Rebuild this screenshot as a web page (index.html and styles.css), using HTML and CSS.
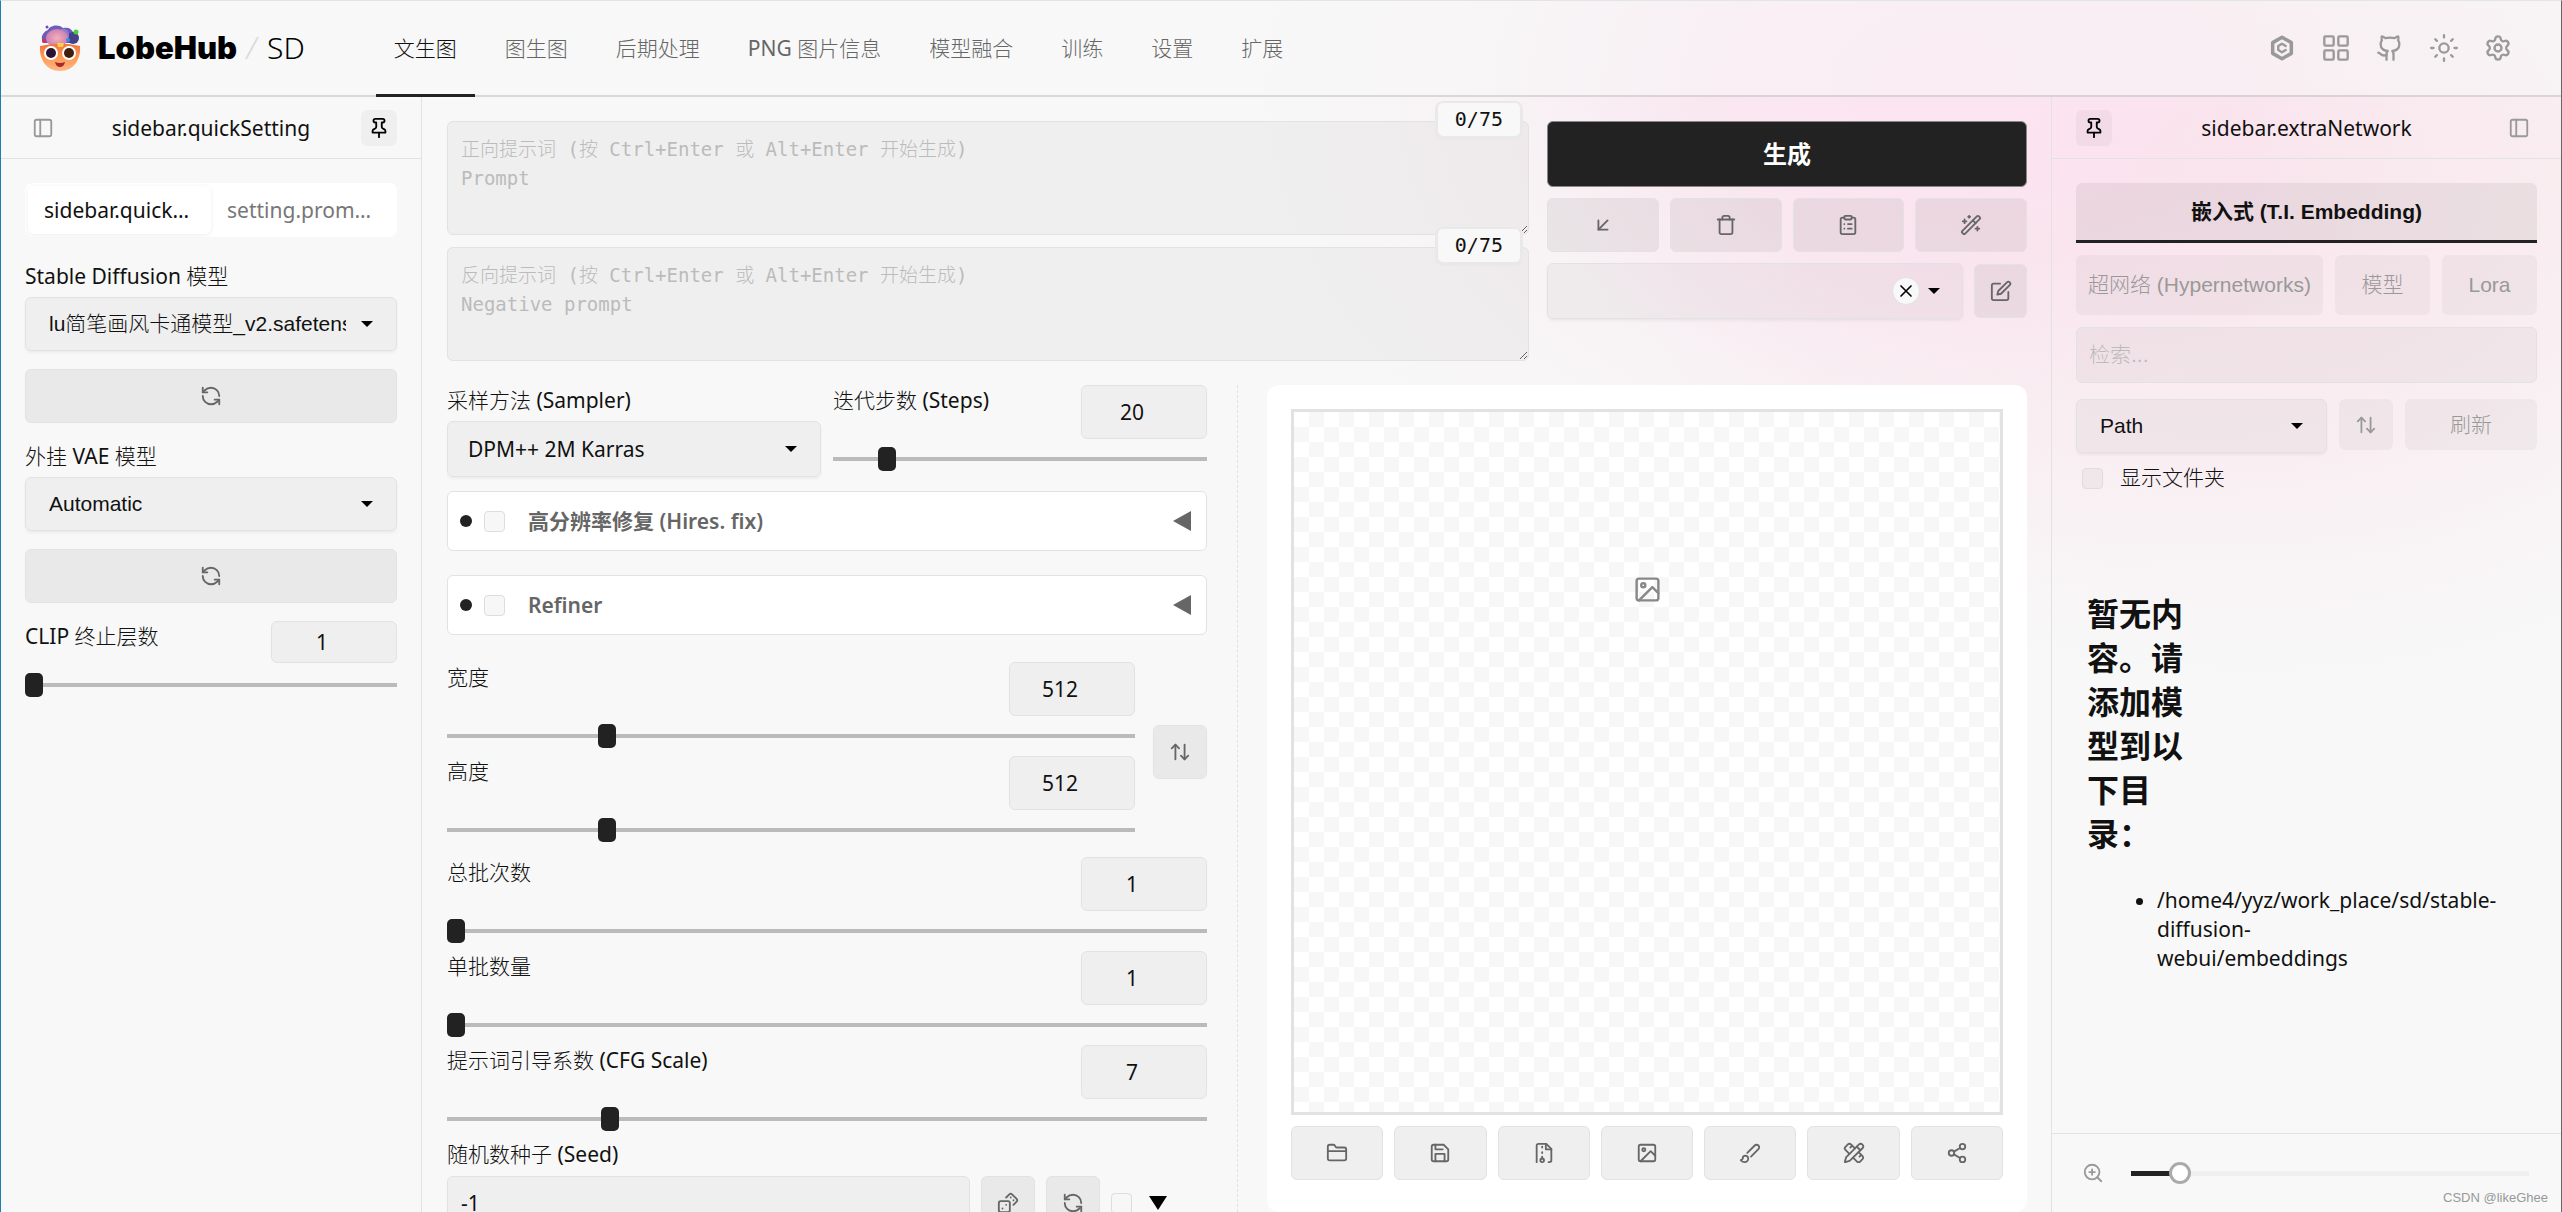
FILE: index.html
```html
<!DOCTYPE html>
<html lang="zh-CN">
<head>
<meta charset="utf-8">
<title>LobeHub SD</title>
<link rel="stylesheet" href="styles.css">
</head>
<body>
<svg class="sprite" aria-hidden="true">
  <symbol id="i-panel" viewBox="0 0 24 24"><rect x="3" y="3" width="18" height="18" rx="2"/><path d="M9 3v18"/></symbol>
  <symbol id="i-pin" viewBox="0 0 24 24"><path d="M12 17v5"/><path d="M5 17h14v-1.76a2 2 0 0 0-1.11-1.79l-1.78-.9A2 2 0 0 1 15 10.76V6h1a2 2 0 0 0 0-4H8a2 2 0 0 0 0 4h1v4.76a2 2 0 0 1-1.11 1.79l-1.78.9A2 2 0 0 0 5 15.24Z"/></symbol>
  <symbol id="i-refresh" viewBox="0 0 24 24"><path d="M21 12a9 9 0 0 0-9-9 9.750 9.750 0 0 0-6.740 2.740L3 8"/><path d="M3 3v5h5"/><path d="M3 12a9 9 0 0 0 9 9 9.750 9.750 0 0 0 6.740-2.740L21 16"/><path d="M16 16h5v5"/></symbol>
  <symbol id="i-swap" viewBox="0 0 24 24"><path d="m3 8 4-4 4 4"/><path d="M7 4v16"/><path d="m21 16-4 4-4-4"/><path d="M17 20V4"/></symbol>
  <symbol id="i-arrow" viewBox="0 0 24 24"><path d="M17 7 7 17"/><path d="M17 17H7V7"/></symbol>
  <symbol id="i-trash" viewBox="0 0 24 24"><path d="M3 6h18"/><path d="M19 6v14a2 2 0 0 1-2 2H7a2 2 0 0 1-2-2V6"/><path d="M8 6V4a2 2 0 0 1 2-2h4a2 2 0 0 1 2 2v2"/></symbol>
  <symbol id="i-clip" viewBox="0 0 24 24"><rect x="8" y="2" width="8" height="4" rx="1"/><path d="M16 4h2a2 2 0 0 1 2 2v14a2 2 0 0 1-2 2H6a2 2 0 0 1-2-2V6a2 2 0 0 1 2-2h2"/><path d="M12 11h4M12 16h4M8 11h.01M8 16h.01"/></symbol>
  <symbol id="i-wand" viewBox="0 0 24 24"><path d="m21.640 3.640-1.280-1.280a1.210 1.210 0 0 0-1.720 0L2.360 18.640a1.210 1.210 0 0 0 0 1.720l1.280 1.280a1.200 1.200 0 0 0 1.720 0L21.640 5.360a1.200 1.200 0 0 0 0-1.720Z"/><path d="m14 7 3 3M5 6v4M19 14v4M10 2v2M7 8H3M21 16h-4M11 3H9"/></symbol>
  <symbol id="i-edit" viewBox="0 0 24 24"><path d="M11 4H4a2 2 0 0 0-2 2v14a2 2 0 0 0 2 2h14a2 2 0 0 0 2-2v-7"/><path d="M18.500 2.500a2.120 2.120 0 0 1 3 3L12 15l-4 1 1-4Z"/></symbol>
  <symbol id="i-x" viewBox="0 0 24 24"><path d="M18 6 6 18M6 6l12 12"/></symbol>
  <symbol id="i-image" viewBox="0 0 24 24"><rect x="3" y="3" width="18" height="18" rx="2"/><circle cx="8.500" cy="8.500" r="1.700"/><path d="m21 15-5-5L5 21"/></symbol>
  <symbol id="i-folder" viewBox="0 0 24 24"><path d="M4 20h16a2 2 0 0 0 2-2V8a2 2 0 0 0-2-2h-7.930a2 2 0 0 1-1.660-.9l-.820-1.200A2 2 0 0 0 7.930 3H4a2 2 0 0 0-2 2v13a2 2 0 0 0 2 2Z"/><path d="M2 10h20"/></symbol>
  <symbol id="i-save" viewBox="0 0 24 24"><path d="M19 21H5a2 2 0 0 1-2-2V5a2 2 0 0 1 2-2h11l5 5v11a2 2 0 0 1-2 2z"/><path d="M17 21v-8H7v8M7 3v5h8"/></symbol>
  <symbol id="i-zip" viewBox="0 0 24 24"><path d="M4 22V4a2 2 0 0 1 2-2h8.500L20 7.500V20a2 2 0 0 1-2 2h-1"/><path d="M14 2v6h6M10 6V5M10 12v-1M10 18v-2"/><circle cx="10" cy="20" r="2"/></symbol>
  <symbol id="i-brush" viewBox="0 0 24 24"><path d="m9.060 11.900 8.070-8.060a2.850 2.850 0 1 1 4.030 4.030l-8.060 8.080"/><path d="M7.070 14.940c-1.660 0-3 1.350-3 3.020 0 1.330-2.500 1.520-2 2.020 1.080 1.100 2.490 2.020 4 2.020 2.200 0 4-1.800 4-4.040a3.010 3.010 0 0 0-3-3.020z"/></symbol>
  <symbol id="i-ruler" viewBox="0 0 24 24"><path d="m15 5 4 4"/><path d="M13 7 8.700 2.700a2.410 2.410 0 0 0-3.400 0L2.700 5.300a2.410 2.410 0 0 0 0 3.400L7 13"/><path d="m8 6 2-2M18 16l2-2"/><path d="m17 11 4.300 4.300c.940.940.940 2.460 0 3.400l-2.600 2.600c-.940.940-2.460.940-3.400 0L11 17"/><path d="M21.170 6.810a1 1 0 0 0-3.980-3.980L3.840 16.170a2 2 0 0 0-.5.830l-1.320 4.350a.5.5 0 0 0 .620.620l4.350-1.320a2 2 0 0 0 .830-.5z"/></symbol>
  <symbol id="i-share" viewBox="0 0 24 24"><circle cx="18" cy="5" r="3"/><circle cx="6" cy="12" r="3"/><circle cx="18" cy="19" r="3"/><path d="m8.590 13.510 6.830 3.980M15.410 6.510l-6.820 3.980"/></symbol>
  <symbol id="i-dice" viewBox="0 0 24 24"><rect x="2" y="10" width="12" height="12" rx="2"/><path d="m17.920 14 3.500-3.500a2.240 2.240 0 0 0 0-3l-5-4.920a2.240 2.240 0 0 0-3 0L10 6M6 18h.01M10 14h.01M15 6h.01M18 9h.01"/></symbol>
  <symbol id="i-civit" viewBox="0 0 24 24"><path d="M12 2.800 20 7.400v9.200l-8 4.600-8-4.600V7.400Z" stroke-width="3"/><path d="M15.200 10.200 12 8.300l-3.200 1.900v3.600l3.200 1.900 3.200-1.900"/></symbol>
  <symbol id="i-grid" viewBox="0 0 24 24"><rect x="2" y="2" width="8" height="8" rx="1"/><rect x="14" y="2" width="8" height="8" rx="1"/><rect x="14" y="14" width="8" height="8" rx="1"/><rect x="2" y="14" width="8" height="8" rx="1"/></symbol>
  <symbol id="i-github" viewBox="0 0 24 24"><path d="M15 22v-4a4.800 4.800 0 0 0-1-3.500c3 0 6-2 6-5.500.080-1.250-.270-2.480-1-3.500.280-1.150.280-2.350 0-3.500 0 0-1 0-3 1.500-2.640-.5-5.360-.5-8 0C6 2 5 2 5 2c-.3 1.150-.3 2.350 0 3.500A5.400 5.400 0 0 0 4 9c0 3.500 3 5.500 6 5.500-.390.490-.680 1.050-.850 1.650-.170.600-.220 1.230-.150 1.850v4"/><path d="M9 18c-4.510 2-5-2-7-2"/></symbol>
  <symbol id="i-sun" viewBox="0 0 24 24"><circle cx="12" cy="12" r="4"/><path d="M12 1v2M12 21v2M4.500 4.500l1.400 1.400M18.100 18.100l1.400 1.400M1 12h2M21 12h2M5.900 18.100l-1.400 1.400M19.500 4.500l-1.400 1.400"/></symbol>
  <symbol id="i-gear" viewBox="0 0 24 24"><path d="M9.671 4.136a2.340 2.340 0 0 1 4.659 0 2.340 2.340 0 0 0 3.319 1.915 2.340 2.340 0 0 1 2.330 4.033 2.340 2.340 0 0 0 0 3.831 2.340 2.340 0 0 1-2.330 4.033 2.340 2.340 0 0 0-3.319 1.915 2.340 2.340 0 0 1-4.659 0 2.340 2.340 0 0 0-3.320-1.915 2.340 2.340 0 0 1-2.330-4.033 2.340 2.340 0 0 0 0-3.831A2.340 2.340 0 0 1 6.350 6.051a2.340 2.340 0 0 0 3.319-1.915"/><circle cx="12" cy="12" r="3"/></symbol>
  <symbol id="i-zoom" viewBox="0 0 24 24"><circle cx="11" cy="11" r="8"/><path d="m21 21-4.350-4.350M11 8v6M8 11h6"/></symbol>
  <symbol id="i-caret" viewBox="0 0 12 6"><path class="solid" d="M0 0h12L6 6z"/></symbol>
</svg>

<header class="topbar">
  <a class="brand" href="#">
    <svg class="logo" viewBox="0 0 42 46" aria-hidden="true">
      <defs>
        <linearGradient id="face" x1="0" y1="0" x2="0" y2="1"><stop offset="0" stop-color="#ec7440"/><stop offset=".5" stop-color="#ff9a54"/><stop offset="1" stop-color="#ffb884"/></linearGradient>
        <radialGradient id="brain"><stop offset="0" stop-color="#f4b0b8"/><stop offset="1" stop-color="#cc80b4"/></radialGradient>
      </defs>
      <path fill="#6f5cb8" d="M4 18C1 12 4 7 9 5c2-5 11-6 15-2 5-1 8 0 10 4 5 2 6 7 3 11z"/>
      <circle cx="34" cy="13" r="6" fill="#43408c"/>
      <path fill="#8d7cc8" d="M22 4c5-1 8 2 8 6s-2 6-5 8z"/>
      <ellipse cx="18" cy="13" rx="11" ry="9" fill="url(#brain)"/>
      <circle cx="37" cy="7" r="2.500" fill="#4ccb3c"/><circle cx="5" cy="16" r="2" fill="#d8304c"/><circle cx="8" cy="2" r="1.500" fill="#7840d8"/><circle cx="29" cy="15" r="2" fill="#3c90d8"/>
      <path fill="url(#face)" d="M1 21q20-5 40 0c1 13-6 25-20 25S0 34 1 21z"/>
      <path fill="#ffcf4c" d="M18 18h7l-1 4h-5z"/>
      <circle cx="12" cy="28" r="7" fill="#fff"/><circle cx="30" cy="28" r="7" fill="#fff"/>
      <circle cx="12" cy="28" r="5" fill="#2a1430"/><circle cx="30" cy="28" r="5" fill="#40200c"/>
      <path fill="#a82830" d="M16 37q5 2 10 0-1 5-5 5t-5-5z"/>
    </svg>
    <span class="brand-name">LobeHub</span>
    <svg class="slash" viewBox="0 0 14 24" aria-hidden="true"><path d="M1 23 13 1"/></svg>
    <span class="brand-sub">SD</span>
  </a>
  <nav class="menu">
    <a class="menu-item active" href="#">文生图</a>
    <a class="menu-item" href="#">图生图</a>
    <a class="menu-item" href="#">后期处理</a>
    <a class="menu-item" href="#">PNG 图片信息</a>
    <a class="menu-item" href="#">模型融合</a>
    <a class="menu-item" href="#">训练</a>
    <a class="menu-item" href="#">设置</a>
    <a class="menu-item" href="#">扩展</a>
  </nav>
  <div class="actions">
    <button aria-label="Civitai"><svg class="icon lg"><use href="#i-civit"/></svg></button>
    <button aria-label="Grid"><svg class="icon lg"><use href="#i-grid"/></svg></button>
    <button aria-label="GitHub"><svg class="icon lg"><use href="#i-github"/></svg></button>
    <button aria-label="Theme"><svg class="icon lg"><use href="#i-sun"/></svg></button>
    <button aria-label="Settings"><svg class="icon lg"><use href="#i-gear"/></svg></button>
  </div>
</header>

<div class="workspace">
  <aside class="side side-left">
    <div class="side-head">
      <button class="ghost" aria-label="Panel"><svg class="icon"><use href="#i-panel"/></svg></button>
      <span>sidebar.quickSetting</span>
      <button class="ghost pinned" aria-label="Pin"><svg class="icon"><use href="#i-pin"/></svg></button>
    </div>
    <div class="side-body">
      <div class="segmented">
        <button class="segment on">sidebar.quick…</button>
        <button class="segment">setting.prom…</button>
      </div>
      <div class="quick">
        <label class="label" for="model">Stable Diffusion 模型</label>
        <div class="select"><select id="model"><option>lu简笔画风卡通模型_v2.safetensors</option></select><svg class="caret"><use href="#i-caret"/></svg></div>
        <button class="btn" aria-label="Refresh models"><svg class="icon"><use href="#i-refresh"/></svg></button>
      </div>
      <div class="quick">
        <label class="label" for="vae">外挂 VAE 模型</label>
        <div class="select"><select id="vae"><option>Automatic</option></select><svg class="caret"><use href="#i-caret"/></svg></div>
        <button class="btn" aria-label="Refresh VAE"><svg class="icon"><use href="#i-refresh"/></svg></button>
      </div>
      <div class="field compact">
        <label class="label" for="clip">CLIP 终止层数</label>
        <input class="num" type="number" value="1" aria-label="CLIP 终止层数">
        <input class="range" id="clip" type="range" min="1" max="12" value="1">
      </div>
    </div>
  </aside>

  <main class="main">
    <section class="prompt-row">
      <div class="prompts">
        <div class="prompt">
          <textarea aria-label="正向提示词" placeholder="正向提示词 (按 Ctrl+Enter 或 Alt+Enter 开始生成)&#10;Prompt"></textarea>
          <span class="counter">0/75</span>
        </div>
        <div class="prompt">
          <textarea aria-label="反向提示词" placeholder="反向提示词 (按 Ctrl+Enter 或 Alt+Enter 开始生成)&#10;Negative prompt"></textarea>
          <span class="counter">0/75</span>
        </div>
      </div>
      <div class="generate">
        <button class="primary">生成</button>
        <div class="tools">
          <button class="btn" aria-label="Read"><svg class="icon"><use href="#i-arrow"/></svg></button>
          <button class="btn" aria-label="Clear"><svg class="icon"><use href="#i-trash"/></svg></button>
          <button class="btn" aria-label="Paste"><svg class="icon"><use href="#i-clip"/></svg></button>
          <button class="btn" aria-label="Apply style"><svg class="icon"><use href="#i-wand"/></svg></button>
        </div>
        <div class="styles">
          <div class="select">
            <select aria-label="Styles"><option></option></select>
            <span class="select-end"><button class="clear" aria-label="Clear styles"><svg class="icon sm"><use href="#i-x"/></svg></button><svg class="caret"><use href="#i-caret"/></svg></span>
          </div>
          <button class="btn" aria-label="Edit styles"><svg class="icon"><use href="#i-edit"/></svg></button>
        </div>
      </div>
    </section>

    <section class="columns">
      <div class="settings">
        <div class="pair">
          <div class="stack">
            <label class="label" for="sampler">采样方法 (Sampler)</label>
            <div class="select tight"><select id="sampler"><option>DPM++ 2M Karras</option></select><svg class="caret"><use href="#i-caret"/></svg></div>
          </div>
          <div class="field">
            <label class="label" for="steps">迭代步数 (Steps)</label>
            <input class="num" type="number" value="20" aria-label="迭代步数">
            <input class="range" id="steps" type="range" min="1" max="150" value="20">
          </div>
        </div>
        <div class="accordion">
          <span class="dot"></span>
          <input type="checkbox" class="check" id="hires">
          <label for="hires">高分辨率修复 (Hires. fix)</label>
          <svg class="tri" viewBox="0 0 18 20"><path d="M18 0v20L0 10z"/></svg>
        </div>
        <div class="accordion">
          <span class="dot"></span>
          <input type="checkbox" class="check" id="refiner">
          <label for="refiner">Refiner</label>
          <svg class="tri" viewBox="0 0 18 20"><path d="M18 0v20L0 10z"/></svg>
        </div>
        <div class="size">
          <div class="size-fields">
            <div class="field">
              <label class="label" for="width">宽度</label>
              <input class="num" type="number" value="512" aria-label="宽度">
              <input class="range" id="width" type="range" min="64" max="2048" value="512">
            </div>
            <div class="field">
              <label class="label" for="height">高度</label>
              <input class="num" type="number" value="512" aria-label="高度">
              <input class="range" id="height" type="range" min="64" max="2048" value="512">
            </div>
          </div>
          <button class="btn square" aria-label="Swap"><svg class="icon"><use href="#i-swap"/></svg></button>
        </div>
        <div class="batch">
          <div class="field">
            <label class="label" for="count">总批次数</label>
            <input class="num" type="number" value="1" aria-label="总批次数">
            <input class="range" id="count" type="range" min="1" max="100" value="1">
          </div>
          <div class="field">
            <label class="label" for="bsize">单批数量</label>
            <input class="num" type="number" value="1" aria-label="单批数量">
            <input class="range" id="bsize" type="range" min="1" max="8" value="1">
          </div>
          <div class="field">
            <label class="label" for="cfg">提示词引导系数 (CFG Scale)</label>
            <input class="num" type="number" value="7" aria-label="CFG Scale">
            <input class="range" id="cfg" type="range" min="1" max="30" value="7">
          </div>
        </div>
        <div class="stack">
          <label class="label" for="seed">随机数种子 (Seed)</label>
          <div class="seed">
            <input class="text" id="seed" type="text" value="-1">
            <button class="btn square" aria-label="Random"><svg class="icon"><use href="#i-dice"/></svg></button>
            <button class="btn square" aria-label="Reuse"><svg class="icon"><use href="#i-refresh"/></svg></button>
            <input type="checkbox" class="check" aria-label="Extra">
            <svg class="tri-down" viewBox="0 0 18 14"><path d="M0 0h18L9 14z"/></svg>
          </div>
        </div>
      </div>

      <div class="results">
        <div class="canvas"><svg class="icon xl"><use href="#i-image"/></svg></div>
        <div class="tools result-tools">
          <button class="btn" aria-label="Folder"><svg class="icon"><use href="#i-folder"/></svg></button>
          <button class="btn" aria-label="Save"><svg class="icon"><use href="#i-save"/></svg></button>
          <button class="btn" aria-label="Zip"><svg class="icon"><use href="#i-zip"/></svg></button>
          <button class="btn" aria-label="Image"><svg class="icon"><use href="#i-image"/></svg></button>
          <button class="btn" aria-label="Inpaint"><svg class="icon"><use href="#i-brush"/></svg></button>
          <button class="btn" aria-label="Extras"><svg class="icon"><use href="#i-ruler"/></svg></button>
          <button class="btn" aria-label="Share"><svg class="icon"><use href="#i-share"/></svg></button>
        </div>
      </div>
    </section>
  </main>

  <aside class="side side-right">
    <div class="side-head">
      <button class="ghost pinned" aria-label="Pin"><svg class="icon"><use href="#i-pin"/></svg></button>
      <span>sidebar.extraNetwork</span>
      <button class="ghost" aria-label="Panel"><svg class="icon"><use href="#i-panel"/></svg></button>
    </div>
    <div class="side-body network">
      <div class="net-tabs">
        <button class="net-tab on">嵌入式 (T.I. Embedding)</button>
        <button class="net-tab">超网络 (Hypernetworks)</button>
        <button class="net-tab">模型</button>
        <button class="net-tab">Lora</button>
      </div>
      <input class="search" type="text" placeholder="检索..." aria-label="检索">
      <div class="net-controls">
        <div class="select"><select aria-label="Sort"><option>Path</option></select><svg class="caret"><use href="#i-caret"/></svg></div>
        <button class="soft" aria-label="Sort order"><svg class="icon"><use href="#i-swap"/></svg></button>
        <button class="soft">刷新</button>
      </div>
      <label class="folders"><input type="checkbox" class="check">显示文件夹</label>
      <div class="empty">
        <h1>暂无内容。请添加模型到以下目录：</h1>
        <ul><li>/home4/yyz/work_place/sd/stable-<br>diffusion-<br>webui/embeddings</li></ul>
      </div>
    </div>
    <footer class="side-foot">
      <svg class="icon"><use href="#i-zoom"/></svg>
      <input class="zoom" type="range" min="0" max="100" value="10" aria-label="Zoom">
      <span class="mark">CSDN @likeGhee</span>
    </footer>
  </aside>
</div>
</body>
</html>
```

FILE: styles.css
```css
* { box-sizing: border-box; }

:root {
  --ui: "Noto Sans", "Noto Sans CJK SC Light", "Noto Sans CJK SC", sans-serif;
  --ui-bold: "Noto Sans", "Noto Sans CJK SC", sans-serif;
  --arial: "Liberation Sans", "Noto Sans CJK SC Light", "Noto Sans CJK SC", sans-serif;
  --arial-bold: "Liberation Sans", "Noto Sans CJK SC", sans-serif;
  --mono: "DejaVu Sans Mono", "Noto Sans CJK SC Light", "Noto Sans CJK SC", monospace;
  --line: #e2e2e2;
  --fill: rgba(0, 0, 0, .035);
  --fill-strong: rgba(0, 0, 0, .06);
  --ink: #111;
  --muted: #666;
  --faint: #999;
}

body {
  margin: 0;
  height: 100vh;
  overflow: hidden;
  display: flex;
  flex-direction: column;
  border-left: 1px solid #1c7fae;
  border-right: 1px solid #666;
  border-top: 1px solid #e2e5e8;
  font: 400 21px/30px var(--ui);
  color: var(--ink);
  background:
    radial-gradient(ellipse 700px 500px at 76% 90px, rgba(253, 226, 241, .85) 0%, rgba(250, 226, 238, .7) 35%, rgba(248, 236, 242, .4) 65%, rgba(248, 248, 248, 0) 100%),
    radial-gradient(ellipse 680px 500px at 88% 180px, rgba(250, 226, 233, .9), rgba(248, 248, 248, 0)),
    #f8f8f8;
}

button, input, select, textarea { font: inherit; color: inherit; margin: 0; }
button { border: 0; background: none; padding: 0; display: flex; align-items: center; justify-content: center; }

.sprite { display: none; }
.icon { width: 22px; height: 22px; fill: none; stroke: currentColor; stroke-width: 2; stroke-linecap: round; stroke-linejoin: round; flex: none; }
.icon.sm { width: 20px; height: 20px; }
.icon.lg { width: 28px; height: 28px; }
.icon.xl { width: 29px; height: 29px; }
.caret { width: 12px; height: 6px; fill: #000; }

/* top bar */
.topbar {
  flex: none;
  height: 96px;
  display: flex;
  align-items: stretch;
  padding: 0 36px 0 38px;
  border-bottom: 2px solid rgba(0, 0, 0, .12);
  background: rgba(248, 248, 248, .5);
}
.brand { display: flex; align-items: center; color: #000; text-decoration: none; }
.logo { width: 42px; height: 46px; margin-right: 17px; }
.brand-name { font: 900 31px/40px Inter, sans-serif; }
.slash { width: 14px; height: 24px; margin: 0 8px; fill: none; stroke: #ddd; stroke-width: 2; }
.brand-sub { font: 300 30px/40px var(--ui); }
.menu { display: flex; gap: 12px; margin-left: 71px; }
.menu-item {
  display: flex;
  align-items: center;
  padding: 0 18px;
  color: var(--muted);
  text-decoration: none;
  margin-bottom: -2px;
  border-bottom: 3px solid transparent;
}
.menu-item.active { color: var(--ink); border-bottom-color: #222; }
.actions { display: flex; margin-left: auto; color: var(--faint); }
.actions button { width: 54px; }

/* shell */
.workspace { flex: 1; min-height: 0; display: grid; grid-template-columns: 421px 1fr 510px; }
.side { display: flex; flex-direction: column; min-height: 0; min-width: 0; }
.side-left { border-right: 1px solid var(--line); }
.side-right { border-left: 1px solid var(--line); }
.side-head {
  height: 62px;
  flex: none;
  display: flex;
  align-items: center;
  justify-content: space-between;
  padding: 0 24px;
  border-bottom: 1px solid var(--line);
}
.ghost { width: 36px; height: 36px; border-radius: 6px; color: var(--faint); }
.ghost.pinned { background: var(--fill); color: #000; }
.side-body { flex: 1; padding: 24px; min-height: 0; }

.segmented { display: grid; grid-template-columns: 1fr 1fr; padding: 3px; background: #fff; border-radius: 8px; margin-bottom: 24px; }
.segment { height: 48px; padding: 0 16px; border-radius: 6px; color: #777; justify-content: flex-start; white-space: nowrap; }
.segment.on { color: var(--ink); box-shadow: 0 1px 4px rgba(0, 0, 0, .08); }

/* controls */
.label { display: block; height: 32px; }
.select {
  display: grid;
  align-items: center;
  background: var(--fill);
  border: 1px solid var(--line);
  border-radius: 6px;
  box-shadow: 0 2px 3px rgba(0, 0, 0, .05);
}
.select > * { grid-area: 1 / 1; }
.select select { appearance: none; width: 100%; height: 52px; border: 0; background: none; padding: 0 50px 0 23px; font-family: var(--arial); }
.select.tight select { height: 54px; padding-left: 20px; font-family: var(--ui); }
.select > .caret { justify-self: end; margin-right: 23px; pointer-events: none; }
.btn { height: 54px; border: 1px solid var(--line); border-radius: 6px; background: var(--fill-strong); color: var(--muted); }
.btn.square { width: 54px; flex: none; }
.num, .text { height: 54px; border: 1px solid var(--line); border-radius: 6px; background: var(--fill); }
.num { appearance: textfield; width: 126px; text-align: center; padding: 0 24px 0 0; }
.num::-webkit-inner-spin-button { display: none; }
.text { min-width: 0; flex: 1; padding: 0 13px; }
.check { appearance: none; width: 21px; height: 21px; flex: none; border: 1px solid #ddd; border-radius: 4px; background: #f7f7f7; }

.quick { margin-bottom: 18px; }
.quick .select { margin: 4px 0 18px; }
.quick .btn { width: 100%; }

.field { display: grid; grid-template-columns: 1fr auto; align-content: start; row-gap: 8px; }
.field.compact { row-gap: 10px; }
.field.compact .num { height: 42px; }
.range { appearance: none; grid-column: 1 / -1; width: 100%; height: 24px; background: linear-gradient(#bbb, #bbb) center / 100% 4px no-repeat; }
.range::-webkit-slider-thumb { appearance: none; width: 18px; height: 24px; border-radius: 5px; background: #222; }

/* main */
.main { display: flex; flex-direction: column; min-height: 0; min-width: 0; padding: 24px 24px 0 25px; }
.prompt-row { display: flex; gap: 18px; margin-bottom: 24px; }
.prompts { flex: 1; display: flex; flex-direction: column; gap: 12px; }
.prompt { position: relative; display: flex; }
.prompt textarea {
  width: 100%;
  height: 114px;
  resize: vertical;
  padding: 13px;
  border: 1px solid var(--line);
  border-radius: 6px;
  background: var(--fill);
  font: 400 19px/29px var(--mono);
}
.prompt textarea::placeholder, .search::placeholder { color: #bbb; }
.counter {
  position: absolute;
  top: -18px;
  right: 9px;
  padding: 0 17px;
  font: 400 20px/33px var(--mono);
  background: #f8f8f8;
  border-radius: 5px;
  box-shadow: 0 1px 0 3px #e9e9e9;
}
.generate { width: 480px; display: flex; flex-direction: column; gap: 11px; }
.primary { height: 66px; border: 1px solid #888; border-radius: 6px; background: #222; color: #fff; font: 700 24px/30px var(--ui-bold); }
.tools { display: grid; grid-auto-flow: column; grid-auto-columns: 1fr; gap: 11px; }
.styles { display: flex; align-items: center; gap: 11px; }
.styles .select { flex: 1; }
.styles .select select { height: 54px; }
.styles .btn { width: 53px; }
.select-end { justify-self: end; display: flex; align-items: center; gap: 8px; margin-right: 22px; }
.clear { width: 28px; height: 28px; border-radius: 50%; background: #f8f8f8; border: 1px solid var(--line); color: #000; }

.columns { flex: 1; display: grid; grid-template-columns: 791px 1fr; gap: 29px; min-height: 0; }
.settings { padding-right: 30px; border-right: 1px dashed var(--line); min-width: 0; overflow: hidden; }
.pair { display: grid; grid-template-columns: 1fr 1fr; gap: 12px; margin-bottom: 14px; }
.stack .select { margin-top: 4px; }
.accordion {
  height: 60px;
  display: flex;
  align-items: center;
  gap: 12px;
  padding: 0 15px 0 12px;
  margin-bottom: 24px;
  background: #fff;
  border: 1px solid var(--line);
  border-radius: 6px;
  color: var(--muted);
  font-family: var(--ui-bold);
  font-weight: 600;
}
.accordion label { flex: 1; margin-left: 11px; }
.dot { width: 12px; height: 12px; border-radius: 50%; background: #222; }
.tri { width: 18px; height: 20px; fill: #666; }
.size { display: flex; align-items: center; gap: 18px; margin: 27px 0 15px; }
.size-fields { flex: 1; display: grid; gap: 8px; }
.batch { display: grid; gap: 8px; margin-bottom: 8px; }
.seed { display: flex; align-items: center; gap: 11px; margin-top: 5px; padding-right: 40px; }
.tri-down { width: 18px; height: 14px; margin-left: 6px; }

.results { background: #fff; border-radius: 12px; padding: 24px; min-height: 0; }
.canvas {
  height: 706px;
  display: flex;
  justify-content: center;
  padding-top: 163px;
  border: 3px solid #e2e2e2;
  background: repeating-conic-gradient(#f7f7f7 0 25%, #fff 0 50%) 0 0 / 30px 30px;
  color: #888;
}
.result-tools { margin-top: 11px; }
.result-tools .btn { background: #efefef; }

/* extra networks */
.network { font-family: var(--arial); }
.net-tabs { display: grid; grid-template-columns: auto 1fr 1fr; gap: 12px; }
.net-tab { height: 60px; padding: 0 12px; border-radius: 6px; background: var(--fill); color: var(--faint); }
.net-tab.on { grid-column: 1 / -1; background: var(--fill-strong); color: var(--ink); font-family: var(--arial-bold); font-weight: 700; border-bottom: 3px solid #222; border-radius: 6px 6px 0 0; }
.search { width: 100%; height: 56px; margin: 12px 0 16px; padding: 0 12px; border: 1px solid var(--line); border-radius: 6px; background: var(--fill); }
.net-controls { display: grid; grid-template-columns: 1fr 54px 132px; gap: 12px; align-items: start; }
.soft { height: 51px; border-radius: 6px; background: var(--fill); color: var(--faint); }
.folders { display: flex; align-items: center; gap: 17px; padding: 0 6px; margin-top: 10px; }
.folders .check { background: var(--fill); }
.empty { padding: 99px 11px 0; font-family: var(--ui); }
.empty h1 { margin: 0; width: 98px; font: 700 32px/44px var(--ui-bold); }
.empty ul { margin: 30px 0 0; padding-left: 70px; line-height: 29px; white-space: nowrap; }
.side-foot { flex: none; height: 79px; display: flex; align-items: center; gap: 27px; padding: 0 32px 0 30px; border-top: 1px solid var(--line); color: var(--faint); position: relative; }
.zoom { appearance: none; flex: 1; height: 22px; background: linear-gradient(90deg, #222 12%, #efefef 12%) center / 100% 5px no-repeat; }
.zoom::-webkit-slider-thumb { appearance: none; width: 22px; height: 22px; border: 3px solid #aaa; border-radius: 50%; background: #fff; }
.mark { position: absolute; right: 13px; bottom: 4px; font: 400 13px/20px var(--arial); }
```
